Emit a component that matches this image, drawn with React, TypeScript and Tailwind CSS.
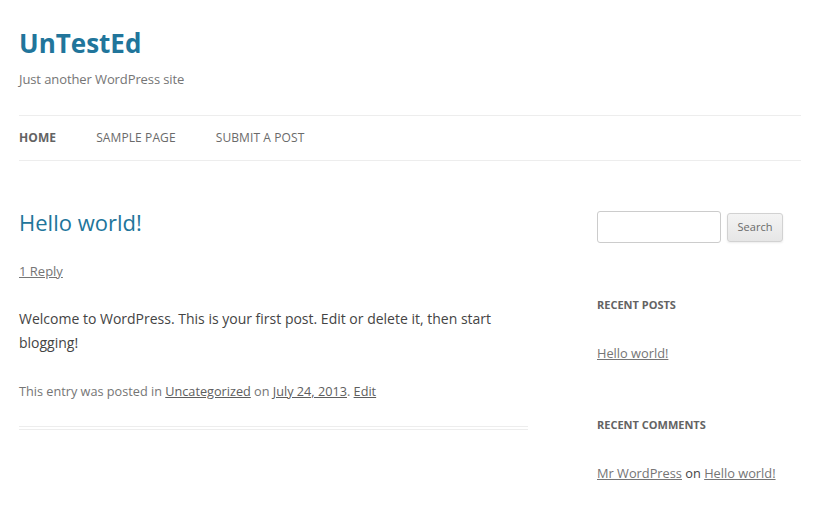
const font = { fontFamily: '"Open Sans", "Liberation Sans", Helvetica, Arial, sans-serif' };

function Header() {
  return (
    <header className="pt-[28px]">
      <h1 className="text-[26px] leading-[31px] font-bold text-[#21759b]">UnTestEd</h1>
      <h2 className="mt-[8px] text-[13px] leading-[24px] text-[#757575] tracking-[-0.1px]">Just another WordPress site</h2>
      <nav className="mt-[24px] border-y border-[#ededed]">
        <ul className="flex gap-[40px] text-[12px] leading-[44px] uppercase tracking-[0.1px]">
          <li className="font-bold text-[#636363]">Home</li>
          <li className="text-[#6a6a6a]">Sample Page</li>
          <li className="text-[#6a6a6a]">Submit a Post</li>
        </ul>
      </nav>
    </header>
  );
}

function Post() {
  return (
    <article className="pb-[23px] border-b-4 border-double border-[#ededed]">
      <h1 className="text-[22px] leading-[28px] text-[#21759b]">Hello world!</h1>
      <div className="mt-[23px] text-[13px] leading-[24px]">
        <a className="underline text-[#757575]">1 Reply</a>
      </div>
      <p className="mt-[24px] text-[14px] leading-[24px] text-[#444]">
        Welcome to WordPress. This is your first post. Edit or delete it, then start blogging!
      </p>
      <footer className="mt-[24px] text-[12.7px] leading-[24px] text-[#757575]">
        This entry was posted in <a className="underline text-[#5e5e5e]">Uncategorized</a> on{' '}
        <a className="underline text-[#5e5e5e]">July 24, 2013</a>. <a className="underline text-[#5e5e5e]">Edit</a>
      </footer>
    </article>
  );
}

function Sidebar() {
  return (
    <aside className="w-[204px] pt-[3px]">
      <form className="flex items-center gap-[6px]">
        <input className="w-[124px] h-[32px] border border-[#ccc] rounded-[3px] px-[6px] text-[13px] outline-none" />
        <button
          type="button"
          className="w-[56px] h-[29px] mt-[1px] text-[11px] text-[#6a6a6a] border border-[#d2d2d2] rounded-[3px] bg-gradient-to-b from-[#f4f4f4] to-[#e6e6e6] shadow-[0_1px_2px_rgba(64,64,64,0.1)]"
        >
          Search
        </button>
      </form>

      <h3 className="mt-[50px] text-[11px] leading-[24px] font-bold uppercase text-[#636363]">Recent Posts</h3>
      <ul className="mt-[24px] text-[12.8px] leading-[24px]">
        <li>
          <a className="underline text-[#757575]">Hello world!</a>
        </li>
      </ul>

      <h3 className="mt-[48px] text-[11px] leading-[24px] font-bold uppercase text-[#636363]">Recent Comments</h3>
      <ul className="mt-[24px] text-[12.8px] leading-[24px] text-[#444]">
        <li>
          <a className="underline text-[#757575]">Mr WordPress</a> on{' '}
          <a className="underline text-[#757575]">Hello world!</a>
        </li>
      </ul>
    </aside>
  );
}

export default function App() {
  return (
    <div className="min-h-[531px] bg-white pl-[19px] pr-[20px] text-[#444]" style={font}>
      <Header />
      <div className="flex justify-between items-start mt-[47px]">
        <main className="w-[509px]">
          <Post />
        </main>
        <Sidebar />
      </div>
    </div>
  );
}
